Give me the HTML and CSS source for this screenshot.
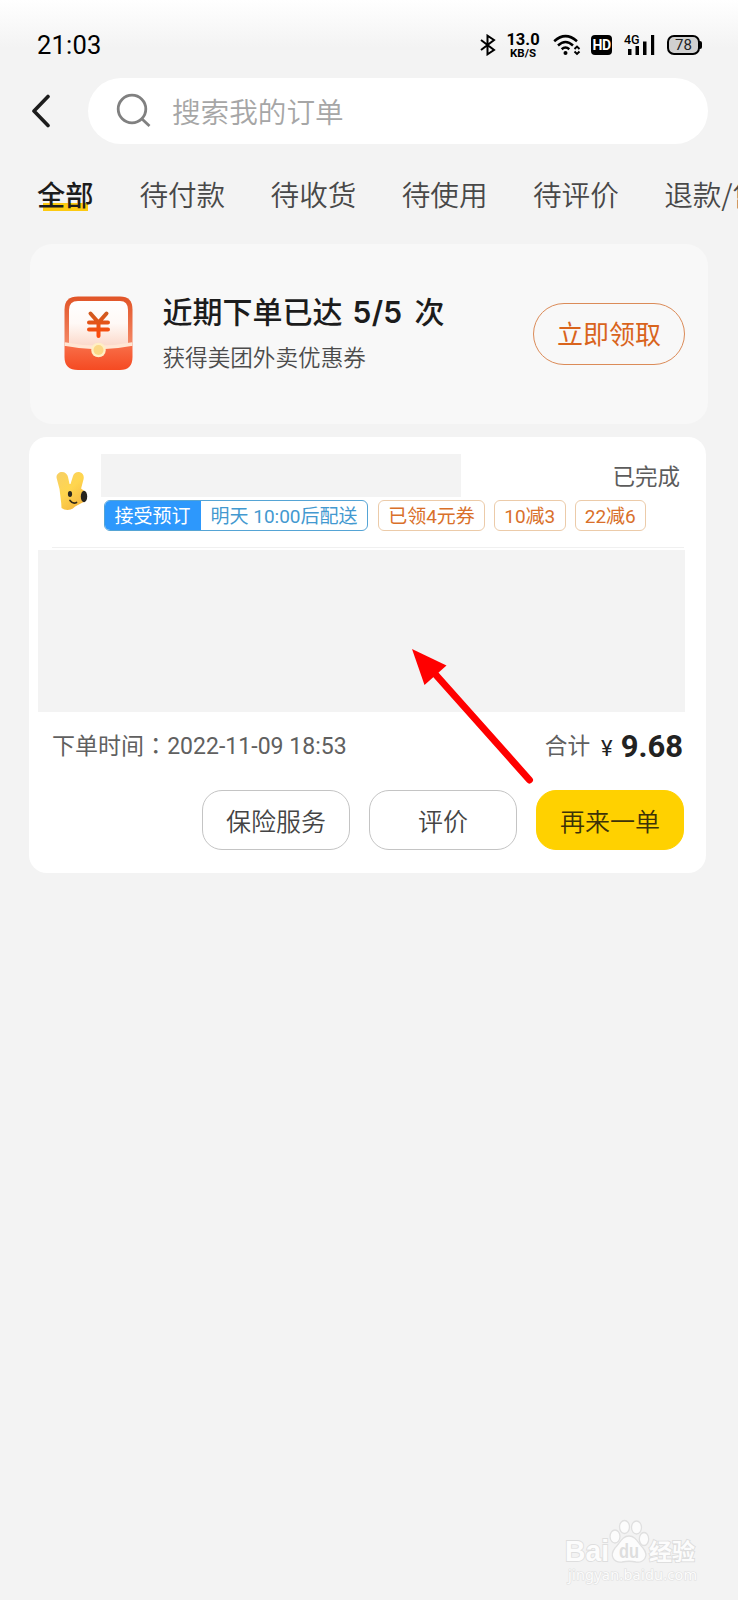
FILE: index.html
```html
<!DOCTYPE html>
<html lang="zh-CN">
<head>
<meta charset="utf-8">
<title>我的订单</title>
<link rel="stylesheet" href="styles.css">
</head>
<body>
<div class="screen">
  <header class="status">
    <span class="clock">21:03</span>
    <div class="indicators">
      <svg class="bt" width="16" height="22" viewBox="0 0 16 22" fill="none" stroke="#000" stroke-width="2"><path d="M1 6l13 10-6.500 4.300V1.700L14 6 1 16"/></svg>
      <span class="speed"><b>13.0</b><i>KB/S</i></span>
      <svg class="wifi" width="28" height="22" viewBox="0 0 28 22" fill="none" stroke="#000" stroke-width="2.500"><path d="M1.200 7.200Q12.500-3 24 7.200M5 11.500q7.500-7 15 0M8.700 15.200q3.800-3.400 7.600 0"/><circle cx="12.500" cy="19" r="2" fill="#000" stroke="none"/><path d="M21.500 15l2.500-2.500 2.500 2.500M21.500 17.500L24 20l2.500-2.500" stroke-width="1.900"/></svg>
      <span class="hd">HD</span>
      <div class="signal"><span>4G</span><svg width="32" height="22" viewBox="0 0 32 22"><path d="M4 15h3.500v6H4zM11.500 12H15v9h-3.500zM19 7.500h3.500V21H19zM27 1h3.200v20H27z"/></svg></div>
      <span class="battery">78</span>
    </div>
  </header>
  <div class="searchrow">
    <svg class="back" width="24" height="34" viewBox="0 0 24 34" fill="none" stroke="#1c1c1c" stroke-width="3.600" stroke-linejoin="round" stroke-linecap="round"><path d="M17 2.500L3 17l14 14.500"/></svg>
    <div class="search">
      <svg width="36" height="36" viewBox="0 0 36 36" fill="none" stroke="#808080" stroke-width="2.800"><circle cx="16" cy="16" r="13.800"/><path d="M25.500 25.500l8 7.500"/></svg>
      <span>搜索我的订单</span>
    </div>
  </div>
  <nav class="tabs">
    <span class="tab active">全部</span><span class="tab">待付款</span><span class="tab">待收货</span><span class="tab">待使用</span><span class="tab">待评价</span><span class="tab">退款/售后</span>
  </nav>
  <section class="banner">
    <svg class="packet" width="70" height="74" viewBox="0 0 70 74">
      <defs>
        <linearGradient id="paper" x2="0" y2="1"><stop stop-color="#fff"/><stop offset=".5" stop-color="#fff9f6"/><stop offset="1" stop-color="#fbd9ca"/></linearGradient>
        <linearGradient id="shell" x2="0" y2="1"><stop stop-color="#e15427"/><stop offset="1" stop-color="#f58a68"/></linearGradient>
        <linearGradient id="pocket" x2="0" y2="1"><stop stop-color="#f8704a"/><stop offset="1" stop-color="#f54a22"/></linearGradient>
        <linearGradient id="yen" gradientUnits="userSpaceOnUse" x1="0" y1="16" x2="0" y2="41"><stop stop-color="#ce5b21"/><stop offset="1" stop-color="#ff4a0b"/></linearGradient>
      </defs>
      <path d="M14 .5h42q12.500 0 12.500 13V50h-68V13.500Q.5.5 14 .5z" fill="url(#shell)"/>
      <path d="M14 5h42q8 0 8 9v36H5V14q0-9 9-9z" fill="url(#paper)"/>
      <path d="M.5 48q34 7 68 0v13q0 13-12.500 13H14Q.5 74 .5 61z" fill="url(#pocket)"/>
      <path d="M.5 48q34 7 68 0" fill="none" stroke="#ffe6d4" stroke-width="3.800"/>
      <circle cx="34.500" cy="54" r="7.300" fill="#ffefc4"/><circle cx="34.500" cy="54" r="5" fill="#fbd886"/>
      <path d="M26.500 17.500l8 9 8-9M25 26.500h19M25 33.500h19M34.500 26.500v13.500" fill="none" stroke="url(#yen)" stroke-width="4" stroke-linecap="round"/>
    </svg>
    <div class="promo">
      <h1>近期下单已达<em>5/5</em>次</h1>
      <p>获得美团外卖优惠券</p>
    </div>
    <span class="claim">立即领取</span>
  </section>
  <section class="card">
    <div class="shop">
      <svg class="mascot" width="32" height="40" viewBox="0 0 32 40">
        <defs><linearGradient id="fur" x2=".7" y2="1"><stop stop-color="#f6cf67"/><stop offset=".5" stop-color="#ffd64f"/><stop offset="1" stop-color="#f4b63f"/></linearGradient></defs>
        <path d="M.6 7C0 3.500 3 1 6 1s5.500 2 6 5l1.500 7h1l2.500-8c1-3 4-4.500 7-3.700 3 .8 4.200 3.500 3.600 6.700l-2.500 9.500 4.500 3.500q2.500 6-2 10l-8.500 4.500q-3 3.500-7.600 3.500-3.500 0-6-2Q5.500 36.500 5.200 32L3.500 18z" fill="url(#fur)"/>
        <ellipse cx="14" cy="23" rx="2.100" ry="3" fill="#2b2921"/><ellipse cx="28" cy="25.500" rx="3.200" ry="5.800" fill="#26241f"/><path d="M14 29.500q3 4 6.500 2" fill="none" stroke="#302818" stroke-width="1.700" stroke-linecap="round"/>
      </svg>
      <div class="shopinfo">
        <div class="namerow"><div class="name"></div><span class="state">已完成</span></div>
        <div class="tags">
          <span class="booking"><b>接受预订</b><i>明天 10:00后配送</i></span><span class="tag wide">已领4元券</span><span class="tag">10减3</span><span class="tag">22减6</span>
        </div>
      </div>
    </div>
    <div class="rule"></div>
    <div class="goods"></div>
    <div class="summary">
      <span class="time">下单时间<span class="colon" lang="zh-TW">：</span>2022-11-09 18:53</span>
      <span class="total">合计</span><span class="yen">¥</span><strong>9.68</strong>
    </div>
    <div class="actions"><span class="btn">保险服务</span><span class="btn">评价</span><span class="btn primary">再来一单</span></div>
    <svg class="arrow" width="124" height="140" viewBox="0 0 124 140"><path d="M2 2l34.500 16.500L14.500 38z" fill="#f00"/><path d="M26 28l93.500 105" stroke="#f00" stroke-width="7" stroke-linecap="round"/></svg>
  </section>
  <footer class="watermark">
    <svg width="140" height="72" viewBox="0 0 140 72">
      <g fill="#fcfcfc" stroke="#e0e0e0" stroke-width="1.300">
        <ellipse cx="56" cy="21.500" rx="5" ry="6.500"/><ellipse cx="65.500" cy="12" rx="5" ry="6.500"/><ellipse cx="77.500" cy="12.500" rx="5" ry="6.500"/><ellipse cx="85" cy="24" rx="4.700" ry="6.500"/>
        <path d="M70 21c7 0 9 7 14 12 7 9 0 15-7 14q-7-1.500-14 0c-8 1-13-6-7-14 5-5 7-12 14-12z"/>
      </g>
      <g font-family="Liberation Sans, Noto Sans CJK SC, sans-serif" font-weight="bold" fill="#fcfcfc" stroke="#dedede" stroke-width="1.800" paint-order="stroke">
        <text x="6" y="46" font-size="30" textLength="44" lengthAdjust="spacingAndGlyphs">Bai</text>
        <text x="60" y="43" font-size="20" textLength="20" lengthAdjust="spacingAndGlyphs" fill="#dedede" stroke="none">du</text>
        <text x="90" y="45" font-size="23" textLength="46">经验</text>
      </g>
      <text x="9" y="65" font-family="Noto Sans, sans-serif" font-size="14.500" textLength="129" fill="#fcfcfc" stroke="#e0e0e0" stroke-width="1.200" paint-order="stroke">jingyan.baidu.com</text>
    </svg>
  </footer>
</div>
</body>
</html>
```
FILE: styles.css
```css
* { box-sizing: border-box; }
body { margin: 0; font-family: Roboto, "Noto Sans CJK SC", sans-serif; }
svg { display: block; flex: none; }
i, em { font-style: normal; }
.screen { width: 738px; height: 1600px; overflow: hidden; display: flex; flex-direction: column; background: linear-gradient(#fff 0, #f3f3f3 48px); white-space: nowrap; }
.status { height: 78px; flex: none; display: flex; justify-content: space-between; padding: 30px 36px 18px 37px; color: #000; }
.clock { font-size: 25.500px; line-height: 31px; letter-spacing: .2px; }
.indicators { display: flex; align-items: center; height: 30px; }
.speed { width: 34px; margin-left: 10px; margin-right: 1px; text-align: center; display: flex; flex-direction: column; }
.speed b { font-weight: 700; font-size: 16.500px; line-height: 15px; }
.speed i { font-weight: 700; font-size: 11.500px; line-height: 12px; }
.wifi { margin-left: 12px; }
.hd { width: 21px; height: 20px; margin-left: 10px; border-radius: 4px; background: #000; color: #fff; font-size: 14px; font-weight: 700; line-height: 20px; text-align: center; letter-spacing: -.5px; }
.signal { margin-left: 12px; width: 32px; position: relative; }
.signal span { position: absolute; left: 0; top: -1px; font-size: 12.500px; line-height: 13px; font-weight: 500; }
.battery { position: relative; width: 33px; height: 20px; margin: 0 2px 0 11px; border: 2px solid #000; border-radius: 7px; background: #d0d0d0; text-align: center; font-size: 15px; line-height: 17px; color: #222; }
.battery::after { content: ""; position: absolute; right: -4px; top: 4px; width: 3px; height: 8px; background: #000; border-radius: 0 2px 2px 0; }
.searchrow { height: 66px; flex: none; display: flex; align-items: center; padding: 0 30px 0 31px; }
.search { margin-left: 33px; flex: 1; height: 66px; border-radius: 33px; background: #fff; display: flex; align-items: center; padding-left: 28px; font-size: 28.600px; color: #a6a6a6; font-weight: 350; }
.search span { margin-left: 20px; padding-bottom: 1px; line-height: 40px; }
.search, .tabs { font-family: "Noto Sans CJK SC", sans-serif; }
.tabs { display: flex; height: 100px; flex: none; padding: 31px 0 0 37px; gap: 45.400px; font-size: 28.600px; line-height: 38px; color: #484848; font-weight: 350; }
.tab { flex: none; }
.tab.active { width: 57px; height: 40px; color: #1c1c1c; font-weight: 500; font-size: 28.300px; background: linear-gradient(#fdca10, #fdca10) 6px 28px / 45px 8px no-repeat; }
.banner { flex: none; width: 678px; height: 180px; margin-left: 30px; border-radius: 22px; background: #f8f8f8; display: flex; align-items: center; padding: 0 23px 0 34px; }
.packet { margin-top: -2px; }
.promo { margin-left: 28.500px; flex: 1; }
.promo h1 { margin: -5px 0 0; font-size: 30px; line-height: 44px; font-weight: 500; color: #1c1c1c; }
.promo em { font-family: Inter, sans-serif; font-weight: 600; font-size: 30px; margin: 0 12px 0 10px; letter-spacing: .3px; }
.promo p { margin: 6px 0 0; font-family: "Noto Sans CJK SC", sans-serif; font-size: 22.600px; line-height: 32px; color: #4c4c4c; font-weight: 350; }
.claim { width: 152px; height: 62px; border: 1.500px solid #db8b58; border-radius: 31px; color: #d9641d; font-size: 26px; line-height: 62px; text-align: center; }
.card { flex: none; position: relative; width: 677px; height: 436px; margin: 13px 0 0 29px; border-radius: 18px; background: #fff; }
.shop { display: flex; height: 109px; padding: 17px 23px 0 27px; }
.mascot { margin-top: 17px; }
.shopinfo { margin-left: 13px; flex: 1; }
.namerow { display: flex; justify-content: space-between; height: 43px; }
.name { width: 360px; height: 43px; background: #f3f3f3; }
.state { font-size: 22.500px; line-height: 47px; margin-right: 3px; color: #5c5c5c; }
.tags { display: flex; margin: 3px 0 0 3px; gap: 9px; font-size: 19px; line-height: 32px; }
.booking { width: 264px; height: 31px; display: flex; border: 1px solid #55a4d5; border-radius: 6px; overflow: hidden; color: #4399d0; margin-right: 1px; }
.booking b { width: 97px; flex: none; background: #2d98fc; color: #fff; font-weight: 400; text-align: center; margin: -1px 0 -1px -1px; line-height: 34px; }
.booking i { flex: 1; text-align: center; }
.tag { width: 71.500px; height: 31px; text-align: center; border: 1px solid #eccba9; border-radius: 6px; color: #d9702a; }
.tag.wide { width: 107px; }
.rule { height: 1px; margin: 1px 22px 2px 23px; background: #f0f0f0; }
.goods { width: 647px; height: 162px; margin-left: 8.500px; background: #f3f3f3; }
.summary { display: flex; height: 70px; padding: 0 23px 0 23px; font-size: 23px; line-height: 70px; color: #606060; align-items: center; }
.time { flex: 1; letter-spacing: .03px; }
.colon { line-height: 1; font-family: "Noto Sans CJK TC", sans-serif; }
.total { font-size: 22.700px; }
.yen { margin-left: 11px; padding-top: 3px; color: #222; font-size: 22px; font-weight: 400; }
.summary strong { margin-left: 8px; font-size: 31px; color: #222; font-weight: 700; }
.actions { display: flex; justify-content: flex-end; gap: 19px; padding: 8px 22px 0 0; }
.btn { width: 148px; height: 60px; border: 1px solid #c4c4c4; border-radius: 20px; text-align: center; color: #444; font-family: "Noto Sans CJK SC", sans-serif; font-weight: 350; font-size: 25px; line-height: 58px; }
.btn.primary { background: #ffd100; border-color: #ffd100; color: #3d3208; }
.arrow { position: absolute; left: 381px; top: 210px; }
.watermark { margin: auto 39px 13px auto; }
```
